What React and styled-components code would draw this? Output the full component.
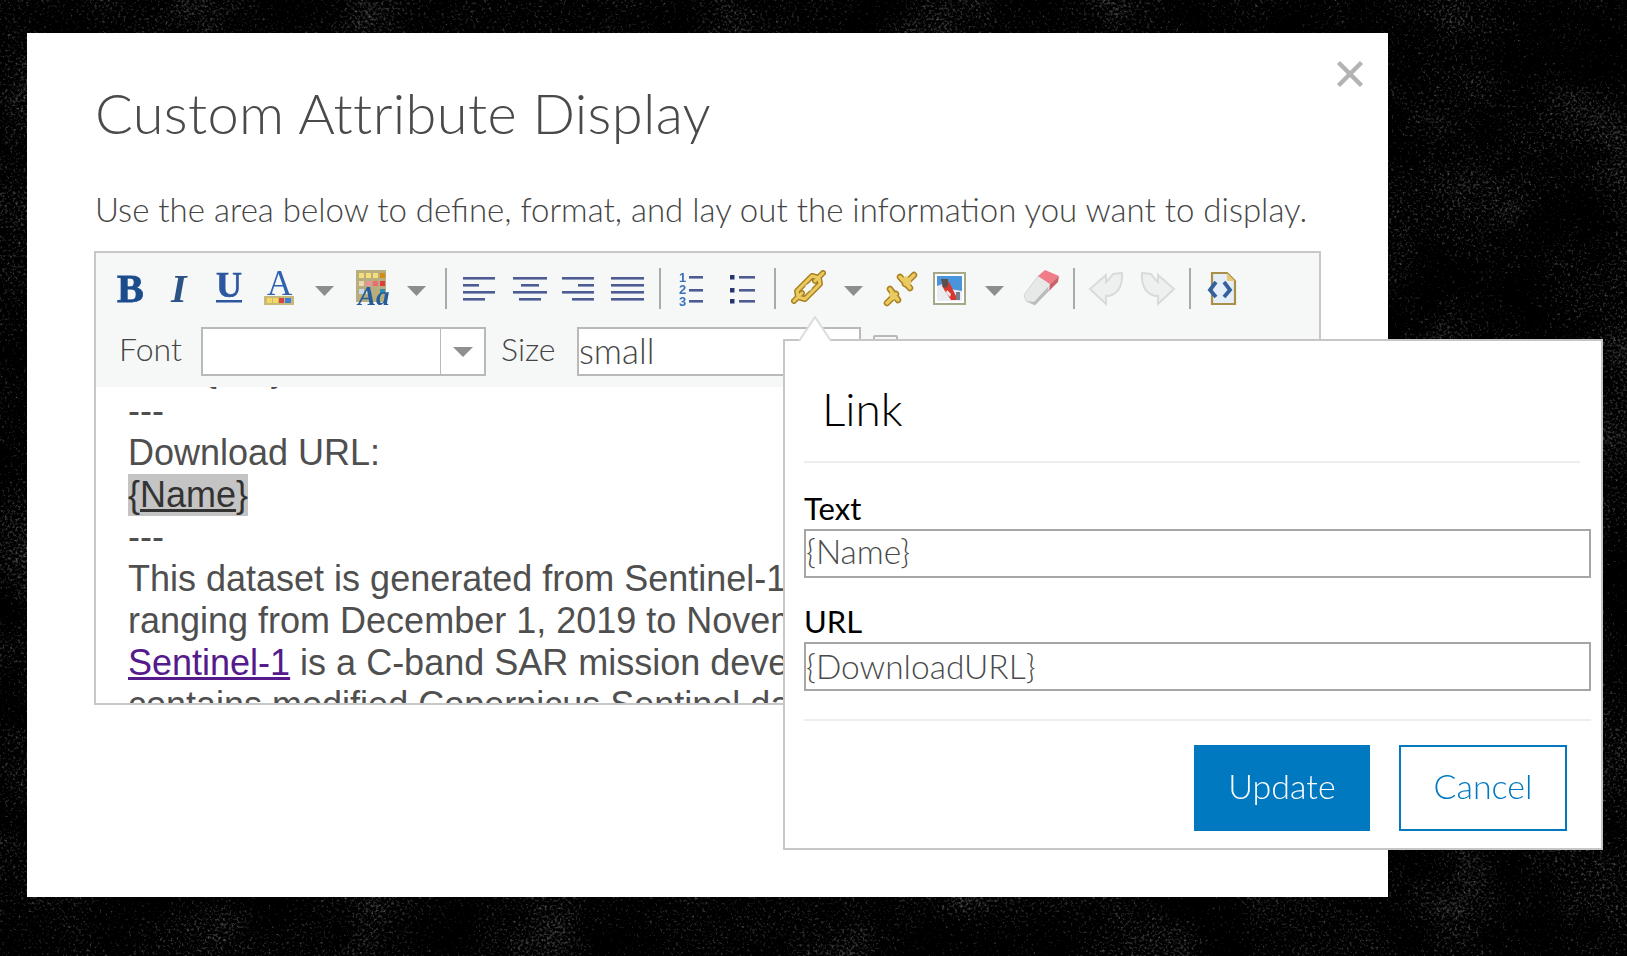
import React from "react";
import styled, { createGlobalStyle } from "styled-components";

const GlobalStyle = createGlobalStyle`
  html, body {
    margin: 0;
    height: 100%;
    background: #090909;
    overflow: hidden;
    font-family: Lato, "Noto Sans", sans-serif;
  }
  * { box-sizing: border-box; }
`;

const Grain = styled.svg`
  position: fixed;
  inset: 0;
  width: 100%;
  height: 100%;
`;

const Modal = styled.div`
  position: relative;
  width: 1361px;
  height: 864px;
  margin: 33px 0 0 27px;
  padding: 48px 68px 0 68px;
  background: #fff;
`;

const Close = styled.svg`
  position: absolute;
  top: 27px;
  right: 24px;
  width: 28px;
  height: 28px;
`;

const Title = styled.h1`
  margin: 0;
  font-size: 56px;
  line-height: 64px;
  font-weight: 300;
  color: #4a4a4a;
  letter-spacing: 0.35px;
`;

const Intro = styled.p`
  margin: 42px 0 0;
  font-size: 33px;
  line-height: 44px;
  font-weight: 300;
  color: #454545;
  white-space: nowrap;
`;

const Editor = styled.div`
  width: 1227px;
  height: 454px;
  margin: 20px 0 0 -1px;
  border: 2px solid #c8c8c8;
  display: flex;
  flex-direction: column;
  overflow: hidden;
`;

const Toolbar = styled.div`
  flex: none;
  height: 134px;
  padding: 15px 0 0 21px;
  background: #f6f8f8;
`;

const IconRow = styled.div`
  display: flex;
  height: 41px;
`;

const Tool = styled.svg`
  flex: none;
  display: block;
  height: 41px;
  overflow: visible;
  margin-left: ${(p) => p.$ml || 0}px;
  filter: blur(0.45px);
`;

const Separator = styled.span`
  flex: none;
  width: 2px;
  height: 41px;
  margin-left: ${(p) => p.$ml}px;
  background: #a9aba6;
`;

const ControlRow = styled.div`
  display: flex;
  align-items: center;
  margin-top: 18px;
  height: 49px;
`;

const ControlLabel = styled.span`
  font-size: 32px;
  line-height: 44px;
  margin-bottom: 6px;
  font-weight: 300;
  color: #454545;
  margin-left: ${(p) => p.$ml}px;
  width: ${(p) => p.$w}px;
`;

const FontSelect = styled.div`
  width: 285px;
  height: 49px;
  border: 2px solid #b9b9b9;
  background: #fff;
  display: flex;
  justify-content: flex-end;
`;

const SelectArrow = styled.div`
  width: 44px;
  border-left: 1px solid #b9b9b9;
  display: flex;
  align-items: center;
  justify-content: center;
  &::after {
    content: "";
    border-left: 10px solid transparent;
    border-right: 10px solid transparent;
    border-top: 10px solid #8f8f8f;
  }
`;

const SizeSelect = styled.div`
  width: 284px;
  height: 49px;
  border: 2px solid #b9b9b9;
  background: #fff;
  font-size: 35px;
  line-height: 43px;
  font-weight: 300;
  color: #454545;
`;

const HiddenButton = styled.span`
  align-self: flex-start;
  width: 25px;
  height: 20px;
  margin: 8px 0 0 12px;
  border: 2px solid #b9b9b9;
  border-radius: 2px 2px 0 0;
`;

const Body = styled.div`
  flex: 1;
  overflow: hidden;
  background: #fff;
  padding-left: 32px;
  font-family: "Liberation Sans", Arial, sans-serif;
  font-size: 36px;
  line-height: 42px;
  color: #4f4f4f;
  white-space: nowrap;
`;

const BodyScroll = styled.div`
  margin-top: -39px;
`;

const Selected = styled.span`
  display: inline-block;
  background: #c4c4c4;
  color: #333;
`;

const Under = styled.span`
  text-decoration: underline;
`;

const DocLink = styled.a`
  color: #551a8b;
  text-decoration: underline;
`;

const Arrow = styled.svg`
  position: absolute;
  left: 772px;
  top: 283px;
  width: 32px;
  height: 25px;
  z-index: 2;
`;

const Popup = styled.div`
  position: absolute;
  left: 756px;
  top: 306px;
  width: 820px;
  height: 511px;
  border: 2px solid #c6c6c6;
  background: #fff;
  display: flex;
  flex-direction: column;
`;

const PopupTitle = styled.h2`
  flex: none;
  height: 122px;
  margin: 0 21px 0 19px;
  padding: 40px 0 0 18px;
  font-size: 46px;
  line-height: 56px;
  font-weight: 300;
  color: #000;
  border-bottom: 2px solid #eeeeee;
`;

const Field = styled.div`
  margin: ${(p) => p.$mt}px 10px 0 19px;
`;

const FieldLabel = styled.label`
  display: block;
  height: 40px;
  font-size: 31px;
  line-height: 38px;
  color: #000;
`;

const FieldInput = styled.input`
  display: block;
  width: 100%;
  height: 49px;
  padding: 0 0 ${(p) => p.$pb}px;
  border: 2px solid #a6a6a6;
  border-radius: 0;
  outline: none;
  font-family: inherit;
  font-size: 33.500px;
  font-weight: 300;
  color: #4a4a4a;
`;

const PopupRule = styled.div`
  height: 2px;
  margin: 28px 10px 0 19px;
  background: #eeeeee;
`;

const Actions = styled.div`
  display: flex;
  justify-content: flex-end;
  gap: 29px;
  margin: 24px 34px 0 0;
`;

const ActionButton = styled.button`
  width: ${(p) => p.$w}px;
  height: 86px;
  border: 2px solid #0079c1;
  border-radius: 0;
  background: ${(p) => (p.$primary ? "#0079c1" : "#fff")};
  color: ${(p) => (p.$primary ? "#fff" : "#0079c1")};
  font-family: inherit;
  font-size: 34px;
  font-weight: 300;
  padding: 0 0 5px;
`;

const Caret = ({ ml }) => (
  <Tool $ml={ml} width="19" viewBox="0 0 19 41">
    <path d="M0 18h19l-9.500 10z" fill="#8d8d8d" />
  </Tool>
);

const LINE = "#4d5d94";

const Lines = ({ ml, w, rows }) => (
  <Tool $ml={ml} width={w} viewBox={`0 0 ${w} 41`}>
    {rows.map(([x, len], i) => (
      <rect key={i} x={x} y={9 + i * 7} width={len} height="2.600" fill={LINE} />
    ))}
  </Tool>
);

const OrderedList = ({ ml }) => (
  <Tool $ml={ml} width="24" viewBox="0 0 24 41">
    <g fontFamily="Liberation Sans" fontSize="13" fontWeight="700" fill="#3a72b8">
      <text x="0" y="14">1</text>
      <text x="0" y="26">2</text>
      <text x="0" y="38">3</text>
    </g>
    <g fill={LINE}>
      <rect x="10" y="8" width="14" height="2.600" />
      <rect x="10" y="21" width="14" height="2.600" />
      <rect x="10" y="32" width="14" height="2.600" />
    </g>
  </Tool>
);

const BulletList = ({ ml }) => (
  <Tool $ml={ml} width="25" viewBox="0 0 25 41">
    <g fill="#27366f">
      <rect x="0" y="7" width="4.500" height="4.500" />
      <rect x="0" y="20" width="4.500" height="4.500" />
      <rect x="0" y="31" width="4.500" height="4.500" />
    </g>
    <g fill={LINE}>
      <rect x="9" y="8" width="16" height="2.600" />
      <rect x="9" y="21" width="16" height="2.600" />
      <rect x="9" y="32" width="16" height="2.600" />
    </g>
  </Tool>
);

const GOLD_DARK = "#a9821f";
const GOLD = "#ecca62";

const LinkIcon = ({ ml }) => (
  <Tool $ml={ml} width="36" viewBox="0 0 36 41">
    <g fill="none" strokeLinecap="round" strokeLinejoin="round">
      <path d="M4 33l8-8M25 13l8-8M8 29l-1-6 15-15 7 2M8 29l7 2 15-15-1-6" stroke={GOLD_DARK} strokeWidth="6" />
      <path d="M4 33l8-8M25 13l8-8M8 29l-1-6 15-15 7 2M8 29l7 2 15-15-1-6" stroke={GOLD} strokeWidth="3" />
    </g>
    <circle cx="18.500" cy="19.500" r="3.200" fill="#f6f8f8" />
  </Tool>
);

const UnlinkIcon = ({ ml }) => (
  <Tool $ml={ml} width="35" viewBox="0 0 35 41">
    <g fill="none" strokeLinecap="round" strokeLinejoin="round">
      <path d="M4 35l9-9M7 21l8 11M31 7l-9 9M17 9l10 11" stroke={GOLD_DARK} strokeWidth="6.500" />
      <path d="M4 35l9-9M7 21l8 11M31 7l-9 9M17 9l10 11" stroke={GOLD} strokeWidth="3.400" />
    </g>
    <path d="M8 22l7 9-6 1-3-5zM19 10l8 9 1-6-4-5z" fill={GOLD} />
  </Tool>
);

const ImageIcon = ({ ml }) => (
  <Tool $ml={ml} width="33" viewBox="0 0 33 41">
    <rect x="1" y="5" width="31" height="31" fill="#fff" stroke="#a6a88c" strokeWidth="2" />
    <rect x="4" y="8" width="25" height="25" fill="#4a94dc" />
    <path d="M4 33V18l6-2 7 5 12 2v10z" fill="#e9edf2" />
    <path d="M11 13l5 1 3 6 6 12h-7l-6-9-3-5z" fill="#d8362f" />
    <path d="M8 11h7v6l-2 3-3-1z" fill="#5a4f4c" />
    <path d="M14 22l4 4-1 3-4-4z" fill="#f3e8e8" />
    <rect x="23" y="24" width="4" height="8" fill="#7a7e88" />
  </Tool>
);

const EraserIcon = ({ ml }) => (
  <Tool $ml={ml} width="37" viewBox="0 0 37 41">
    <path d="M1 27L15 8l13 8L12 37l-9-4z" fill="#e7e8e8" stroke="#d4d4d4" strokeWidth="1" />
    <path d="M15 8l7-6 14 6-9 8z" fill="#f27b88" />
    <path d="M27 16l9-8-1 6-9 9z" fill="#c9636e" />
    <path d="M3 33l9 4 14-14-1-4-14 15z" fill="#b9bab9" />
  </Tool>
);

const UndoIcon = ({ ml, flip }) => (
  <Tool $ml={ml} width="35" viewBox="0 0 35 41">
    <path
      d={flip ? "M2 5l9 1 4 5 3 3V7l16 14-16 15v-8C8 28 1 20 2 5z" : "M33 5l-9 1-4 5-3 3V7L1 21l16 15v-8c10 0 17-8 16-23z"}
      fill="#eeefef"
      stroke="#d9dad9"
      strokeWidth="2"
    />
  </Tool>
);

const SourceIcon = ({ ml }) => (
  <Tool $ml={ml} width="28" viewBox="0 0 28 41">
    <path d="M4 5h15l8 8v23H4z" fill="#e4edf8" stroke="#a98f4a" strokeWidth="2.200" />
    <path d="M19 5l8 8h-8z" fill="#e8c878" />
    <path d="M8 14l-6 8 6 7M16 14l6 8-6 7" fill="none" stroke="#345f9e" strokeWidth="3.800" />
  </Tool>
);

const App = () => (
  <>
    <GlobalStyle />
    <Grain aria-hidden="true">
      <filter id="grain" x="0" y="0" width="100%" height="100%" colorInterpolationFilters="sRGB">
        <feTurbulence type="fractalNoise" baseFrequency="0.38" numOctaves="3" seed="7" result="fine" />
        <feTurbulence type="fractalNoise" baseFrequency="0.012" numOctaves="4" seed="3" result="cloud" />
        <feComposite in="fine" in2="cloud" operator="arithmetic" k1="0" k2="1" k3="0.45" k4="0" />
        <feColorMatrix values="1.1 0 0 0 -0.6  1.1 0 0 0 -0.6  1.1 0 0 0 -0.6  0 0 0 0 1" />
      </filter>
      <rect width="100%" height="100%" filter="url(#grain)" />
    </Grain>
    <Modal>
      <Close viewBox="0 0 28 28">
        <path d="M2.500 2.500l23 23M25.500 2.500l-23 23" stroke="#b3b3b3" strokeWidth="4.500" />
      </Close>
      <Title>Custom Attribute Display</Title>
      <Intro>Use the area below to define, format, and lay out the information you want to display.</Intro>
      <Editor>
        <Toolbar>
          <IconRow>
            <Tool width="27" viewBox="0 0 27 41">
              <text x="0" y="34" fontFamily="Liberation Serif" fontSize="40" fontWeight="700" fill="#1c4c8c" stroke="#1c4c8c" strokeWidth="0.800">B</text>
            </Tool>
            <Tool $ml={25} width="22" viewBox="0 0 22 41">
              <text x="2" y="34" fontFamily="Liberation Serif" fontSize="40" fontStyle="italic" fontWeight="700" fill="#2b5484">I</text>
            </Tool>
            <Tool $ml={25} width="27" viewBox="0 0 27 41">
              <text x="0" y="29" fontFamily="Liberation Serif" fontSize="36" fontWeight="700" fill="#2c569f" stroke="#2c569f" strokeWidth="0.600">U</text>
              <rect x="0" y="32" width="26" height="2.500" fill="#2c569f" />
            </Tool>
            <Tool $ml={21} width="30" viewBox="0 0 30 41">
              <text x="3" y="27" fontFamily="Liberation Serif" fontSize="35" fill="#2f62b0">A</text>
              <rect x="0" y="28" width="30" height="9" fill="#c6ba7a" />
              <rect x="3" y="30" width="5" height="5" fill="#f4da62" />
              <rect x="9" y="30" width="5" height="5" fill="#f4da62" />
              <rect x="15" y="30" width="5" height="5" fill="#d9443f" />
              <rect x="21" y="30" width="6" height="5" fill="#3f7fdc" />
            </Tool>
            <Caret ml={21} />
            <Tool $ml={22} width="35" viewBox="0 0 35 41">
              <rect x="0" y="2" width="30" height="32" fill="#b8ad7c" />
              <g fill="#f5dd79">
                <rect x="3" y="5" width="5" height="5" />
                <rect x="10" y="5" width="5" height="5" />
                <rect x="17" y="5" width="5" height="5" />
              </g>
              <rect x="24" y="5" width="5" height="5" fill="#d58a12" />
              <rect x="3" y="13" width="5" height="5" fill="#f0d7b0" />
              <rect x="10" y="13" width="5" height="5" fill="#f0909a" />
              <rect x="17" y="13" width="5" height="5" fill="#ec6a72" />
              <rect x="24" y="13" width="5" height="5" fill="#dc3d3d" />
              <rect x="3" y="21" width="5" height="5" fill="#c7d8ea" />
              <rect x="10" y="21" width="5" height="5" fill="#dfe6cf" />
              <rect x="24" y="21" width="5" height="5" fill="#2a8fb0" />
              <text x="2" y="37" fontFamily="Liberation Serif" fontSize="27" fontStyle="italic" fontWeight="700" fill="#255d9c">Aa</text>
            </Tool>
            <Caret ml={16} />
            <Separator $ml={19} />
            <Lines ml={16} w={32} rows={[[0, 32], [0, 16], [0, 32], [0, 22]]} />
            <Lines ml={18} w={34} rows={[[0, 34], [8, 18], [0, 34], [6, 22]]} />
            <Lines ml={15} w={32} rows={[[0, 32], [16, 16], [0, 32], [10, 22]]} />
            <Lines ml={17} w={33} rows={[[0, 33], [0, 33], [0, 33], [0, 33]]} />
            <Separator $ml={15} />
            <OrderedList ml={18} />
            <BulletList ml={27} />
            <Separator $ml={19} />
            <LinkIcon ml={14} />
            <Caret ml={18} />
            <UnlinkIcon ml={20} />
            <ImageIcon ml={15} />
            <Caret ml={19} />
            <EraserIcon ml={19} />
            <Separator $ml={13} />
            <UndoIcon ml={14} />
            <UndoIcon ml={16} flip />
            <Separator $ml={14} />
            <SourceIcon ml={17} />
          </IconRow>
          <ControlRow>
            <ControlLabel $ml={2} $w={82}>Font</ControlLabel>
            <FontSelect>
              <SelectArrow />
            </FontSelect>
            <ControlLabel $ml={15} $w={76}>Size</ControlLabel>
            <SizeSelect>small</SizeSelect>
            <HiddenButton />
          </ControlRow>
        </Toolbar>
        <Body>
          <BodyScroll>
            <div>Tile: {"{Rel}"}</div>
            <div>---</div>
            <div>Download URL:</div>
            <div>
              <Selected>{"{"}<Under>Name</Under>{"}"}</Selected>
            </div>
            <div>---</div>
            <div>This dataset is generated from Sentinel-1 imagery</div>
            <div>ranging from December 1, 2019 to November 30</div>
            <div>
              <DocLink href="#">Sentinel-1</DocLink> is a C-band SAR mission developed
            </div>
            <div>contains modified Copernicus Sentinel data</div>
          </BodyScroll>
        </Body>
      </Editor>
      <Arrow viewBox="0 0 32 25">
        <path d="M0 25L16 1l16 24" fill="#fff" stroke="#dcdcdc" strokeWidth="2" />
      </Arrow>
      <Popup>
        <PopupTitle>Link</PopupTitle>
        <Field $mt={26}>
          <FieldLabel>Text</FieldLabel>
          <FieldInput readOnly $pb={5} value="{Name}" />
        </Field>
        <Field $mt={24}>
          <FieldLabel>URL</FieldLabel>
          <FieldInput readOnly $pb={2} value="{DownloadURL}" />
        </Field>
        <PopupRule />
        <Actions>
          <ActionButton $primary $w={176}>Update</ActionButton>
          <ActionButton $w={168}>Cancel</ActionButton>
        </Actions>
      </Popup>
    </Modal>
  </>
);

export default App;
